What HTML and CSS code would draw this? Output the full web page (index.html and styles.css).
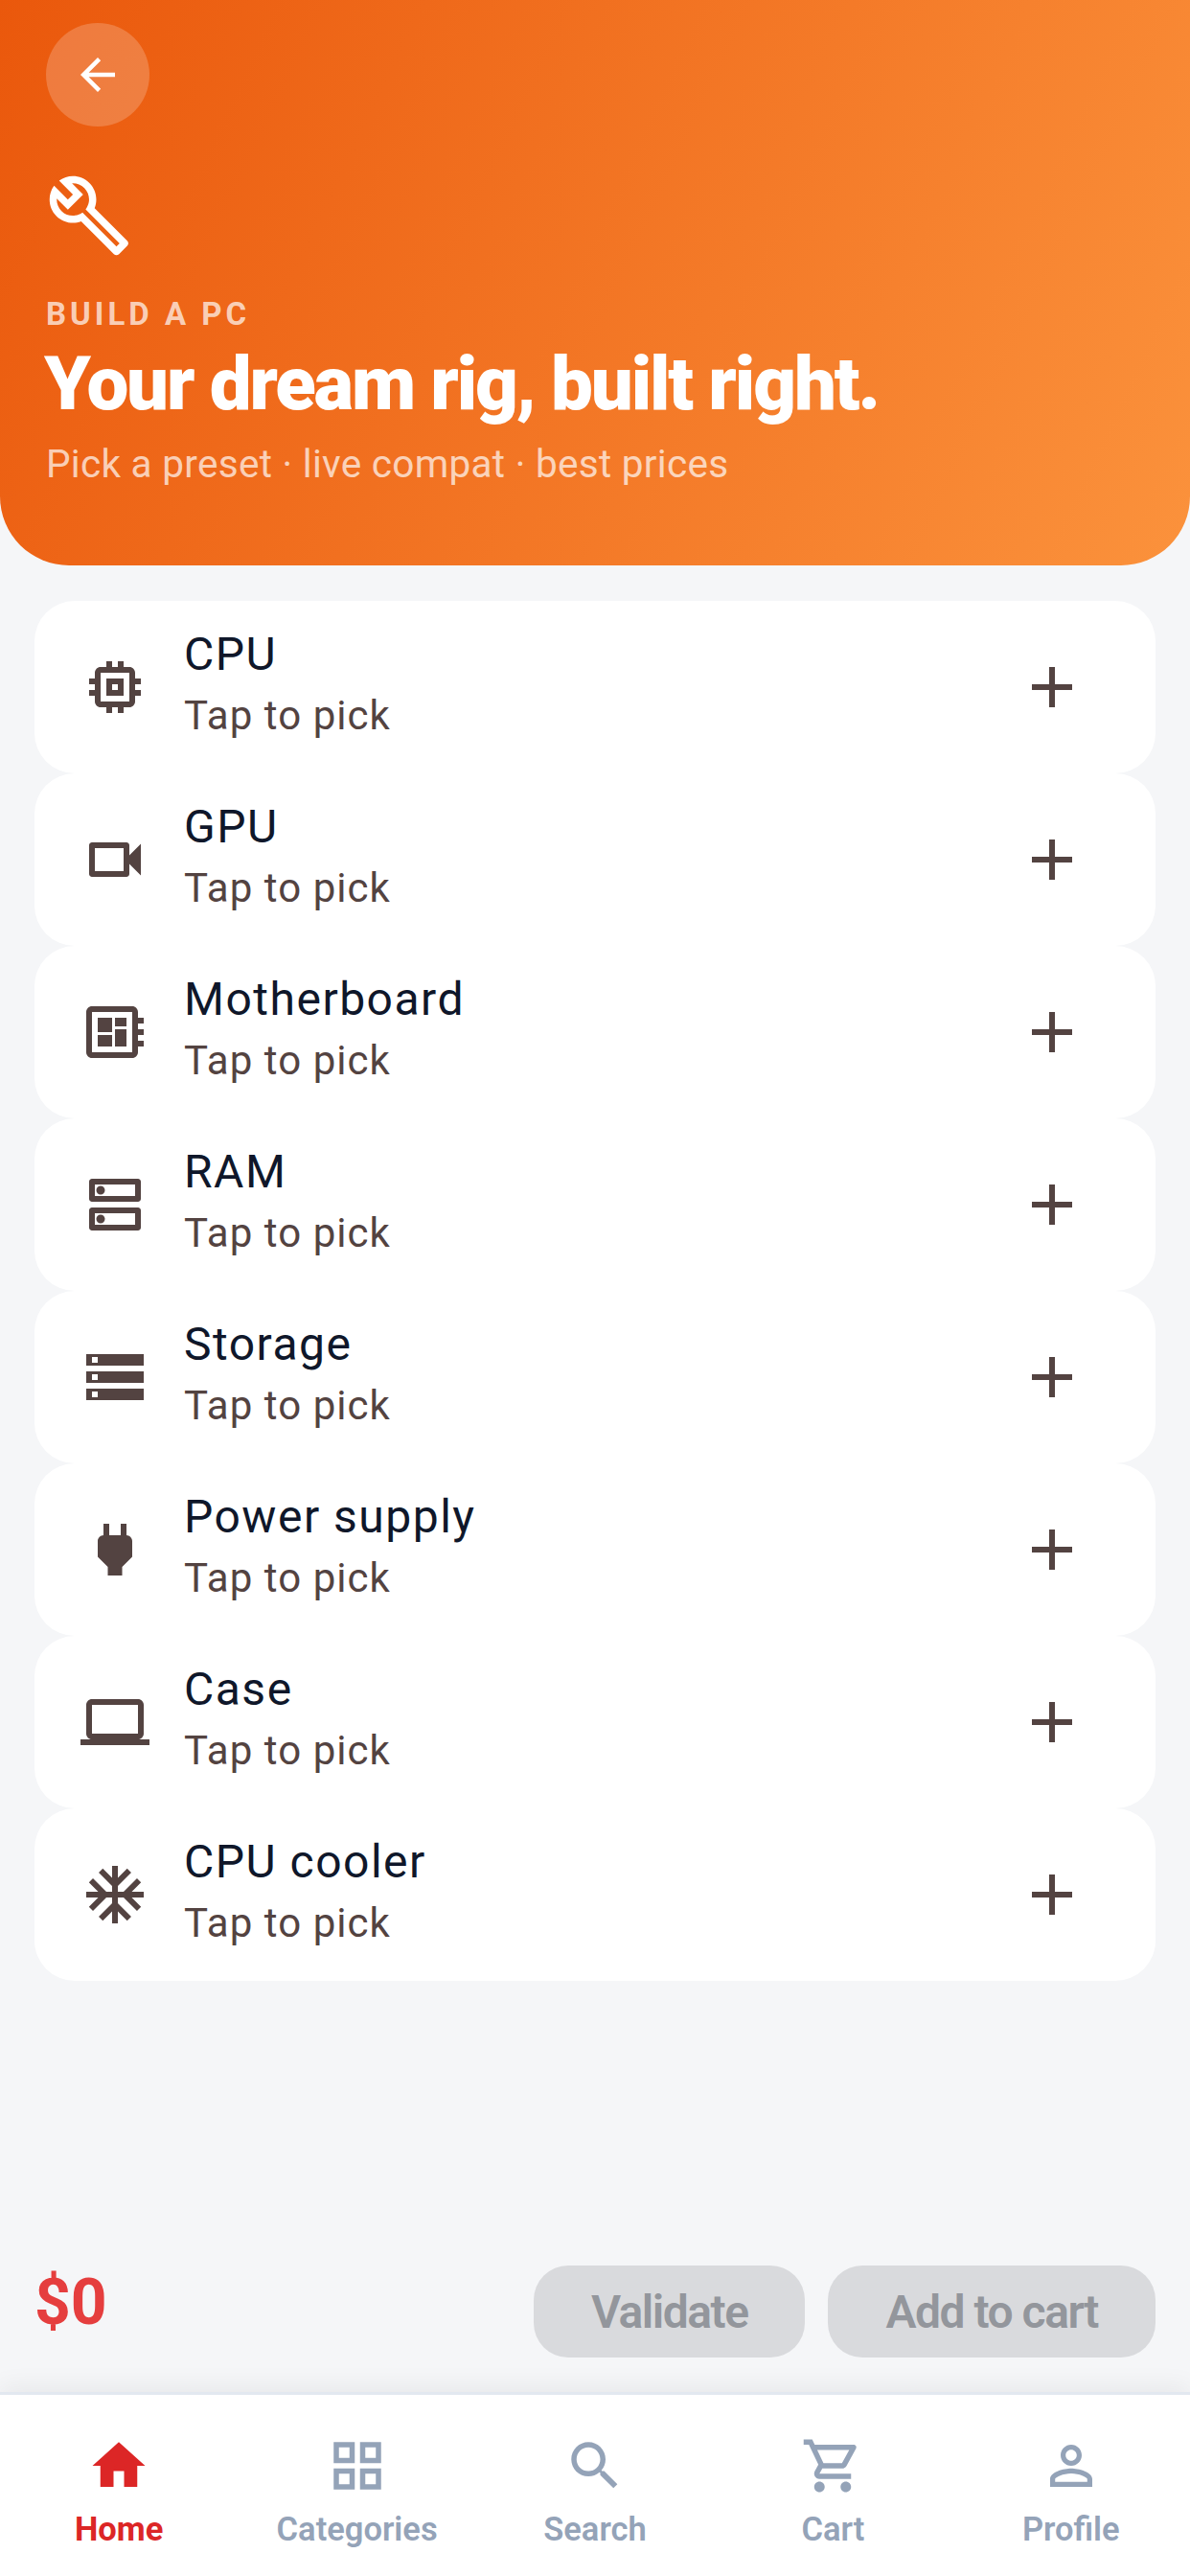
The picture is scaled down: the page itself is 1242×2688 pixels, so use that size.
FILE: index.html
```html
<!DOCTYPE html>
<html lang="en">
<head>
<meta charset="utf-8">
<title>Build a PC</title>
<link rel="stylesheet" href="styles.css">
</head>
<body>
<svg class="sprite" width="0" height="0" aria-hidden="true">
  <symbol id="i-add" viewBox="0 0 24 24"><path d="M19 13h-6v6h-2v-6H5v-2h6V5h2v6h6v2z"/></symbol>
</svg>
<main class="screen">
  <header class="hero">
    <button class="back" type="button" aria-label="Back">
      <svg class="back-icon" viewBox="0 0 24 24"><path d="M20 11H7.83l5.59-5.59L12 4l-8 8 8 8 1.41-1.41L7.83 13H20v-2z"/></svg>
    </button>
    <svg class="hero-icon" viewBox="0 0 24 24"><path d="M22.61 18.99l-9.08-9.08c.93-2.34.45-5.1-1.44-7C9.79.61 6.21.4 3.66 2.26L7.5 6.11 6.08 7.52 2.25 3.69C.39 6.23.6 9.82 2.9 12.11c1.86 1.86 4.57 2.35 6.89 1.48l9.11 9.11c.39.39 1.02.39 1.41 0l2.3-2.3c.4-.38.4-1.01 0-1.41zm-3 1.6l-9.46-9.46c-.61.45-1.29.72-2 .82-1.36.2-2.79-.21-3.83-1.25C3.37 9.76 2.93 8.5 3 7.26l3.09 3.09 4.24-4.24-3.09-3.09c1.24-.07 2.49.37 3.44 1.31 1.08 1.08 1.49 2.57 1.24 3.96-.13.71-.43 1.37-.89 1.96l9.45 9.45-.88.88z"/></svg>
    <p class="eyebrow">BUILD A PC</p>
    <h1 class="headline">Your dream rig, built right.</h1>
    <p class="sub">Pick a preset · live compat · best prices</p>
  </header>

  <section class="parts">
    <article class="part">
      <svg class="part-icon" viewBox="0 0 24 24"><path d="M15 9H9v6h6V9zm-2 4h-2v-2h2v2zm8-2V9h-2V7c0-1.1-.9-2-2-2h-2V3h-2v2h-2V3H9v2H7c-1.1 0-2 .9-2 2v2H3v2h2v2H3v2h2v2c0 1.1.9 2 2 2h2v2h2v-2h2v2h2v-2h2c1.1 0 2-.9 2-2v-2h2v-2h-2v-2h2zm-4 6H7V7h10v10z"/></svg>
      <div class="part-text"><span class="part-name">CPU</span><span class="part-hint">Tap to pick</span></div>
      <svg class="part-add"><use href="#i-add"/></svg>
    </article>
    <article class="part">
      <svg class="part-icon" viewBox="0 0 24 24"><path d="M15 8v8H5V8h10m1-2H4c-.55 0-1 .45-1 1v10c0 .55.45 1 1 1h12c.55 0 1-.45 1-1v-3.5l4 4v-11l-4 4V7c0-.55-.45-1-1-1z"/></svg>
      <div class="part-text"><span class="part-name">GPU</span><span class="part-hint">Tap to pick</span></div>
      <svg class="part-add"><use href="#i-add"/></svg>
    </article>
    <article class="part">
      <svg class="part-icon" viewBox="0 0 24 24"><path d="M22 9V7h-2V5c0-1.1-.9-2-2-2H4c-1.1 0-2 .9-2 2v14c0 1.1.9 2 2 2h14c1.1 0 2-.9 2-2v-2h2v-2h-2v-2h2v-2h-2V9h2zm-4 10H4V5h14v14zM6 13h5v4H6zm6-6h4v3h-4zM6 7h5v5H6zm6 4h4v6h-4z"/></svg>
      <div class="part-text"><span class="part-name">Motherboard</span><span class="part-hint">Tap to pick</span></div>
      <svg class="part-add"><use href="#i-add"/></svg>
    </article>
    <article class="part">
      <svg class="part-icon" viewBox="0 0 24 24"><path d="M19 15v4H5v-4h14m1-2H4c-.55 0-1 .45-1 1v6c0 .55.45 1 1 1h16c.55 0 1-.45 1-1v-6c0-.55-.45-1-1-1zM7 18.5c-.82 0-1.5-.67-1.5-1.5s.68-1.5 1.5-1.5 1.5.67 1.5 1.5-.67 1.5-1.5 1.5zM19 5v4H5V5h14m1-2H4c-.55 0-1 .45-1 1v6c0 .55.45 1 1 1h16c.55 0 1-.45 1-1V4c0-.55-.45-1-1-1zM7 8.5c-.82 0-1.5-.67-1.5-1.5S6.18 5.5 7 5.5s1.5.68 1.5 1.5S7.83 8.5 7 8.5z"/></svg>
      <div class="part-text"><span class="part-name">RAM</span><span class="part-hint">Tap to pick</span></div>
      <svg class="part-add"><use href="#i-add"/></svg>
    </article>
    <article class="part">
      <svg class="part-icon" viewBox="0 0 24 24"><path d="M2 20h20v-4H2v4zm2-3h2v2H4v-2zM2 4v4h20V4H2zm4 3H4V5h2v2zm-4 7h20v-4H2v4zm2-3h2v2H4v-2z"/></svg>
      <div class="part-text"><span class="part-name">Storage</span><span class="part-hint">Tap to pick</span></div>
      <svg class="part-add"><use href="#i-add"/></svg>
    </article>
    <article class="part">
      <svg class="part-icon" viewBox="0 0 24 24"><path d="M16.01 7L16 3h-2v4h-4V3H8v4h-.01C7 6.99 6 7.99 6 8.99v5.49L9.5 18v3h5v-3l3.5-3.51v-5.5c0-1-1-2-1.99-1.99z"/></svg>
      <div class="part-text"><span class="part-name">Power supply</span><span class="part-hint">Tap to pick</span></div>
      <svg class="part-add"><use href="#i-add"/></svg>
    </article>
    <article class="part">
      <svg class="part-icon" viewBox="0 0 24 24"><path d="M20 18c1.1 0 1.99-.9 1.99-2L22 6c0-1.1-.9-2-2-2H4c-1.1 0-2 .9-2 2v10c0 1.1.9 2 2 2H0v2h24v-2h-4zM4 6h16v10H4V6z"/></svg>
      <div class="part-text"><span class="part-name">Case</span><span class="part-hint">Tap to pick</span></div>
      <svg class="part-add"><use href="#i-add"/></svg>
    </article>
    <article class="part">
      <svg class="part-icon" viewBox="0 0 24 24"><path d="M22 11h-4.17l3.24-3.24-1.41-1.42L15 11h-2V9l4.66-4.66-1.42-1.41L13 6.17V2h-2v4.17L7.76 2.93 6.34 4.34 11 9v2H9L4.34 6.34 2.93 7.76 6.17 11H2v2h4.17l-3.24 3.24 1.41 1.42L9 13h2v2l-4.66 4.66 1.42 1.41L11 17.83V22h2v-4.17l3.24 3.24 1.42-1.41L13 15v-2h2l4.66 4.66 1.41-1.42L17.83 13H22z"/></svg>
      <div class="part-text"><span class="part-name">CPU cooler</span><span class="part-hint">Tap to pick</span></div>
      <svg class="part-add"><use href="#i-add"/></svg>
    </article>
  </section>

  <section class="summary">
    <span class="price">$0</span>
    <div class="actions">
      <button class="action action-validate" type="button" disabled>Validate</button>
      <button class="action action-cart" type="button" disabled>Add to cart</button>
    </div>
  </section>

  <nav class="tabs">
    <a class="tab tab-active">
      <svg class="tab-icon" viewBox="0 0 24 24"><path d="M10 20v-6h4v6h5v-8h3L12 3 2 12h3v8z"/></svg>
      <span class="tab-label">Home</span>
    </a>
    <a class="tab">
      <svg class="tab-icon" viewBox="0 0 24 24"><path d="M3 3v8h8V3H3zm6 6H5V5h4v4zm-6 4v8h8v-8H3zm6 6H5v-4h4v4zm4-16v8h8V3h-8zm6 6h-4V5h4v4zm-6 4v8h8v-8h-8zm6 6h-4v-4h4v4z"/></svg>
      <span class="tab-label">Categories</span>
    </a>
    <a class="tab">
      <svg class="tab-icon" viewBox="0 0 24 24"><path d="M15.5 14h-.79l-.28-.27C15.41 12.59 16 11.11 16 9.5 16 5.91 13.09 3 9.5 3S3 5.91 3 9.5 5.91 16 9.5 16c1.61 0 3.09-.59 4.23-1.57l.27.28v.79l5 4.99L20.49 19l-4.99-5zm-6 0C7.01 14 5 11.99 5 9.5S7.01 5 9.5 5 14 7.01 14 9.5 11.99 14 9.5 14z"/></svg>
      <span class="tab-label">Search</span>
    </a>
    <a class="tab">
      <svg class="tab-icon" viewBox="0 0 24 24"><path d="M15.55 13c.75 0 1.41-.41 1.75-1.03l3.58-6.49c.37-.66-.11-1.48-.87-1.48H5.21l-.94-2H1v2h2l3.6 7.59-1.35 2.44C4.52 15.37 5.48 17 7 17h12v-2H7l1.1-2h7.45zM6.16 6h12.15l-2.76 5H8.53L6.16 6zM7 18c-1.1 0-1.99.9-1.99 2S5.9 22 7 22s2-.9 2-2-.9-2-2-2zm10 0c-1.1 0-1.99.9-1.99 2s.89 2 1.99 2 2-.9 2-2-.9-2-2-2z"/></svg>
      <span class="tab-label">Cart</span>
    </a>
    <a class="tab">
      <svg class="tab-icon" viewBox="0 0 24 24"><path d="M12 5.9c1.16 0 2.1.94 2.1 2.1s-.94 2.1-2.1 2.1S9.9 9.16 9.9 8s.94-2.1 2.1-2.1m0 9c2.97 0 6.1 1.46 6.1 2.1v1.1H5.9V17c0-.64 3.13-2.1 6.1-2.1M12 4C9.79 4 8 5.79 8 8s1.79 4 4 4 4-1.79 4-4-1.79-4-4-4zm0 9c-2.67 0-8 1.34-8 4v3h16v-3c0-2.66-5.33-4-8-4z"/></svg>
      <span class="tab-label">Profile</span>
    </a>
  </nav>
</main>
</body>
</html>
```
FILE: styles.css
```css
* { box-sizing: border-box; }
html, body { margin: 0; padding: 0; }
body { background: #f5f6f8; font-family: Roboto, "Liberation Sans", sans-serif; }
.sprite { position: absolute; }
.screen { width: 1242px; height: 2688px; display: flex; flex-direction: column; overflow: hidden; background: #f5f6f8; }

.hero {
  height: 590px;
  flex: none;
  padding: 24px 48px 0;
  background: linear-gradient(115.4deg, #ea580c 0%, #fb923c 100%);
  border-radius: 0 0 72px 72px;
  color: #fff;
}
.back { display: flex; align-items: center; justify-content: center; width: 108px; height: 108px; padding: 0; border: 0; border-radius: 50%; background: rgba(255,255,255,.2); }
.back-icon { width: 54px; height: 54px; fill: #fff; }
.hero-icon { display: block; width: 90px; height: 90px; margin-top: 48px; fill: #fff; }
.eyebrow { margin: 38px 0 0; font-size: 33px; line-height: 40px; font-weight: 700; letter-spacing: 4px; color: rgba(255,255,255,.7); }
.headline { margin: 7px 0 0 -2px; font-size: 78px; line-height: 92px; font-weight: 900; letter-spacing: -2.12px; color: #fff; }
.sub { margin: 12px 0 0; font-size: 40.5px; line-height: 50px; font-weight: 400; letter-spacing: .29px; color: rgba(255,255,255,.7); }

.parts { display: flex; flex-direction: column; padding: 37px 36px 0; }
.part { display: flex; align-items: center; height: 180px; padding: 0 72px 0 48px; background: #fff; border-radius: 42px; }
.part-icon { width: 72px; height: 72px; flex: none; fill: #534341; }
.part-text { flex: 1; display: flex; flex-direction: column; margin-left: 36px; padding-bottom: 7px; }
.part-name { font-size: 48px; line-height: 66px; letter-spacing: 1.5px; color: #0f172a; }
.part-hint { font-size: 42px; line-height: 62px; letter-spacing: 1.05px; color: #534341; }
.part-add { width: 72px; height: 72px; flex: none; fill: #534341; }

.summary { flex: 1; display: flex; align-items: flex-end; justify-content: space-between; padding: 0 36px 36px; }
.price { align-self: flex-end; margin: 0 0 19px 0; font-size: 66px; line-height: 76px; font-weight: 700; color: #e53e3e; }
.actions { display: flex; gap: 24px; }
.action { height: 96px; padding: 0 60px; border: 0; border-radius: 36px; background: #d9dadd; font-family: Roboto, sans-serif; font-size: 48px; font-weight: 600; letter-spacing: -1.5px; color: #93969c; }

.tabs { flex: none; position: relative; display: grid; grid-template-columns: repeat(5, 1fr); height: 192px; padding-top: 41px; background: #fff; border-top: 3px solid #e2e8f0; box-shadow: 0 -6px 24px rgba(0,0,0,.06); }
.tab { display: flex; flex-direction: column; align-items: center; color: #94a3b8; }
.tab-active { color: #dc2626; }
.tab-icon { width: 66px; height: 66px; fill: currentColor; }
.tab-label { margin-top: 11px; font-size: 34.5px; line-height: 44px; font-weight: 600; }
.tab-active .tab-label { font-weight: 700; }
```
